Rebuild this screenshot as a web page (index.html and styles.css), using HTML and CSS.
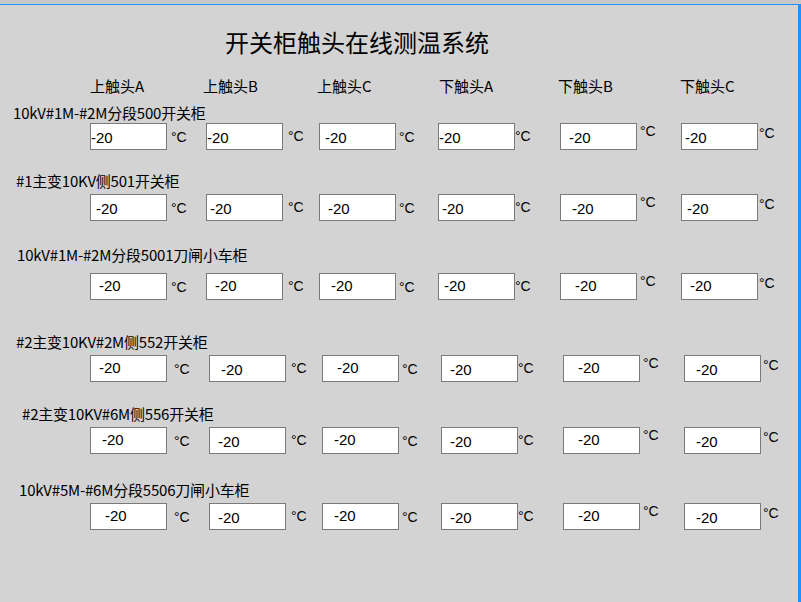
FILE: index.html
```html
<!DOCTYPE html>
<html lang="zh-CN">
<head>
    <meta charset="UTF-8">
    <title>开关柜触头在线测温系统</title>
    <link rel="stylesheet" href="styles.css">
</head>
<body>
    <div class="topbar"></div>
    <div class="frame">
        <h1 class="title">开关柜触头在线测温系统</h1>

        <div class="heads">
            <span>上触头A</span>
            <span>上触头B</span>
            <span>上触头C</span>
            <span>下触头A</span>
            <span>下触头B</span>
            <span>下触头C</span>
        </div>

        <div class="row r1">
            <div class="name">10kV#1M-#2M分段500开关柜</div>
            <div class="cells">
                <div class="cell"><input class="p1" type="text" value="-20"><span class="unit">°C</span></div>
                <div class="cell"><input class="p1" type="text" value="-20"><span class="unit">°C</span></div>
                <div class="cell"><input class="p6" type="text" value="-20"><span class="unit">°C</span></div>
                <div class="cell"><input class="p1" type="text" value="-20"><span class="unit">°C</span></div>
                <div class="cell"><input class="p9" type="text" value="-20"><span class="unit">°C</span></div>
                <div class="cell"><input class="p3" type="text" value="-20"><span class="unit">°C</span></div>
            </div>
        </div>

        <div class="row r2">
            <div class="name">#1主变10KV侧501开关柜</div>
            <div class="cells">
                <div class="cell"><input class="p6" type="text" value="-20"><span class="unit">°C</span></div>
                <div class="cell"><input class="p3" type="text" value="-20"><span class="unit">°C</span></div>
                <div class="cell"><input class="p9" type="text" value="-20"><span class="unit">°C</span></div>
                <div class="cell"><input class="p3" type="text" value="-20"><span class="unit">°C</span></div>
                <div class="cell"><input class="p12" type="text" value="-20"><span class="unit">°C</span></div>
                <div class="cell"><input class="p6" type="text" value="-20"><span class="unit">°C</span></div>
            </div>
        </div>

        <div class="row r3">
            <div class="name">10kV#1M-#2M分段5001刀闸小车柜</div>
            <div class="cells">
                <div class="cell"><input class="p9 hi" type="text" value="-20"><span class="unit">°C</span></div>
                <div class="cell"><input class="p9 hi" type="text" value="-20"><span class="unit">°C</span></div>
                <div class="cell"><input class="p12 hi" type="text" value="-20"><span class="unit">°C</span></div>
                <div class="cell"><input class="p6 hi" type="text" value="-20"><span class="unit">°C</span></div>
                <div class="cell"><input class="p15 hi" type="text" value="-20"><span class="unit">°C</span></div>
                <div class="cell"><input class="p9 hi" type="text" value="-20"><span class="unit">°C</span></div>
            </div>
        </div>

        <div class="row r4">
            <div class="name">#2主变10KV#2M侧552开关柜</div>
            <div class="cells wide">
                <div class="cell"><input class="p9 hi" type="text" value="-20"><span class="unit">°C</span></div>
                <div class="cell"><input class="p12" type="text" value="-20"><span class="unit">°C</span></div>
                <div class="cell"><input class="p15 hi" type="text" value="-20"><span class="unit">°C</span></div>
                <div class="cell"><input class="p9" type="text" value="-20"><span class="unit">°C</span></div>
                <div class="cell"><input class="p15 hi" type="text" value="-20"><span class="unit">°C</span></div>
                <div class="cell"><input class="p12" type="text" value="-20"><span class="unit">°C</span></div>
            </div>
        </div>

        <div class="row r5">
            <div class="name">#2主变10KV#6M侧556开关柜</div>
            <div class="cells wide">
                <div class="cell"><input class="p12 hi" type="text" value="-20"><span class="unit">°C</span></div>
                <div class="cell"><input class="p9" type="text" value="-20"><span class="unit">°C</span></div>
                <div class="cell"><input class="p12 hi" type="text" value="-20"><span class="unit">°C</span></div>
                <div class="cell"><input class="p9" type="text" value="-20"><span class="unit">°C</span></div>
                <div class="cell"><input class="p15 hi" type="text" value="-20"><span class="unit">°C</span></div>
                <div class="cell"><input class="p12" type="text" value="-20"><span class="unit">°C</span></div>
            </div>
        </div>

        <div class="row r6">
            <div class="name">10kV#5M-#6M分段5506刀闸小车柜</div>
            <div class="cells wide">
                <div class="cell"><input class="p15 hi" type="text" value="-20"><span class="unit">°C</span></div>
                <div class="cell"><input class="p9" type="text" value="-20"><span class="unit">°C</span></div>
                <div class="cell"><input class="p12 hi" type="text" value="-20"><span class="unit">°C</span></div>
                <div class="cell"><input class="p9" type="text" value="-20"><span class="unit">°C</span></div>
                <div class="cell"><input class="p15 hi" type="text" value="-20"><span class="unit">°C</span></div>
                <div class="cell"><input class="p12" type="text" value="-20"><span class="unit">°C</span></div>
            </div>
        </div>
    </div>
</body>
</html>
```

FILE: styles.css
```css
body {
    margin: 0;
    background: #d3d3d3;
    color: #000;
    font-family: "Noto Sans CJK SC", "Noto Sans", sans-serif;
    overflow: hidden;
}
.topbar {
    height: 4px;
    background: #c8c8c8;
}
.frame {
    height: 598px;
    box-sizing: border-box;
    border-top: 1px solid #1e90ff;
    border-right: 3px solid #1e90ff;
}
.title {
    margin: 25px 0 0 0;
    padding-left: 225px;
    font-size: 24px;
    line-height: 24px;
    font-weight: normal;
}
.heads {
    display: grid;
    grid-template-columns: 116px 113px 119px 122px 121px auto;
    padding-left: 90px;
    margin-top: 24px;
    font-size: 15px;
    line-height: 15px;
}
.heads span:nth-child(2) { margin-left: -3px; }
.heads span:nth-child(3) { margin-left: -2px; }
.heads span:nth-child(4) { margin-left: 1px; }
.heads span:nth-child(5) { margin-left: -2px; }
.heads span:nth-child(6) { margin-left: -1px; }

.name {
    font-size: 15px;
    line-height: 15px;
    letter-spacing: -0.2px;
    white-space: nowrap;
}
.cells {
    display: grid;
    grid-template-columns: 116px 113px 119px 122px 121px auto;
    padding-left: 90px;
}
.cells.wide {
    grid-template-columns: 119px 113px 119px 122px 121px auto;
}
.cell {
    display: flex;
    align-items: flex-start;
}
.cell input {
    width: 77px;
    height: 27px;
    box-sizing: border-box;
    margin: 0;
    padding: 1px 0 0 0;
    border: 1px solid #7a7a7a;
    border-radius: 0;
    background: #fff;
    font-family: "Liberation Sans", Arial, sans-serif;
    font-size: 15px;
    color: #000;
    outline: none;
}
.cell input.hi { padding-top: 0; padding-bottom: 2px; }
.cell input.p1 { padding-left: 0; }
.cell input.p3 { padding-left: 3px; }
.cell input.p6 { padding-left: 5px; }
.cell input.p9 { padding-left: 8px; }
.cell input.p12 { padding-left: 11px; }
.cell input.p15 { padding-left: 14px; }

.unit {
    font-family: "Liberation Sans", Arial, sans-serif;
    font-size: 14px;
    line-height: 14px;
    white-space: nowrap;
}
.cell:nth-child(1) .unit { margin: 6.5px 0 0 4px; }
.cell:nth-child(2) .unit { margin: 5.5px 0 0 5px; }
.cell:nth-child(3) .unit { margin: 6.5px 0 0 3px; }
.cell:nth-child(4) .unit { margin: 5.5px 0 0 0; }
.cell:nth-child(5) .unit { margin: 1px 0 0 3px; }
.cell:nth-child(6) .unit { margin: 3px 0 0 1px; }
.wide .cell:nth-child(1) .unit { margin-left: 7px; }
.wide .cell:nth-child(6) .unit { margin-left: 2px; }

.r1 { margin-top: 12px; }
.r1 .name { padding-left: 13px; }
.r1 .cells { margin-top: 3px; }

.r2 { margin-top: 23px; }
.r2 .name { padding-left: 16px; }
.r2 .cells { margin-top: 6px; }

.r3 { margin-top: 26px; }
.r3 .name { padding-left: 17px; }
.r3 .cells { margin-top: 11px; }

.r4 { margin-top: 34px; }
.r4 .name { padding-left: 16px; }
.r4 .cells { margin-top: 6px; }

.r5 { margin-top: 24px; }
.r5 .name { padding-left: 22px; }
.r5 .cells { margin-top: 6px; }

.r6 { margin-top: 28px; }
.r6 .name { padding-left: 19px; }
.r6 .cells { margin-top: 6px; }
```
